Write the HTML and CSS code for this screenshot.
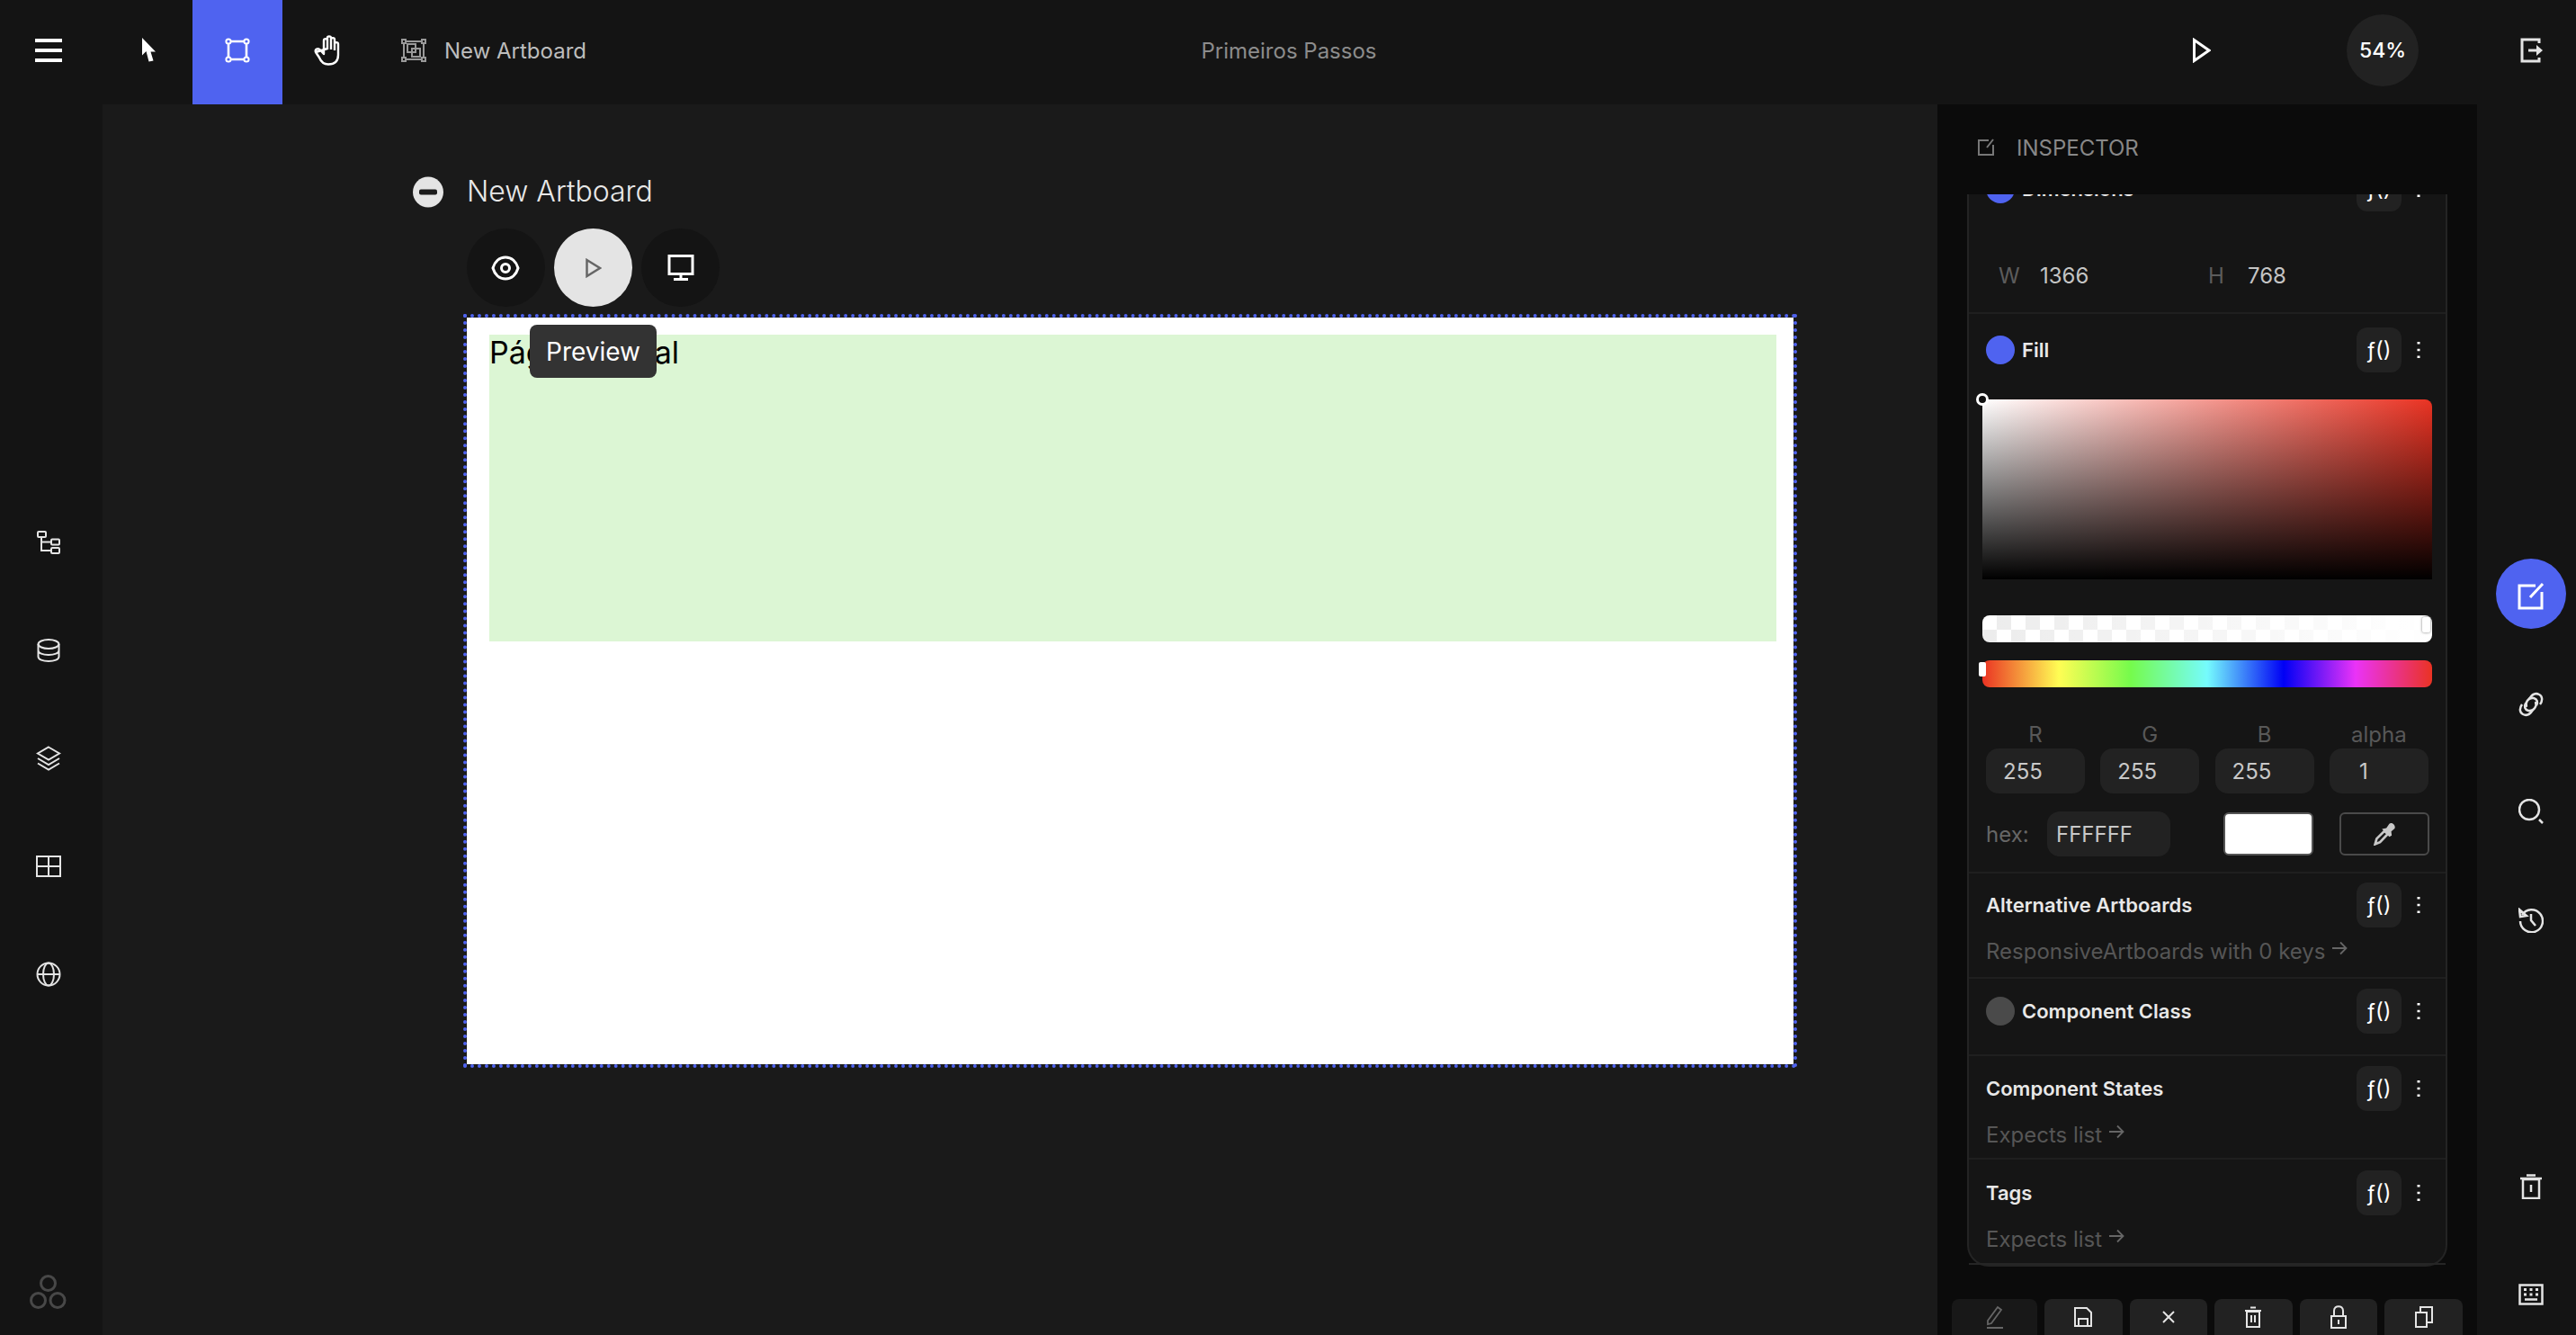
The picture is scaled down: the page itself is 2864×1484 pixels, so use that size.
FILE: index.html
```html
<!DOCTYPE html>
<html lang="pt">
<head>
<meta charset="utf-8">
<title>New Artboard</title>
<link rel="stylesheet" href="styles.css">
</head>
<body>
<header class="topbar">
  <div class="tool tool-menu"><svg width="30" height="26" viewBox="0 0 30 26"><path d="M0 2h30M0 13h30M0 24h30" class="s w" stroke-width="4"/></svg></div>
  <div class="tool tool-cursor"><svg width="18" height="28" viewBox="0 0 18 28"><path d="M1 0 16 15.500 10.500 15.500 13.500 25.500 8.500 26.500 5.500 15 1 19.500Z" fill="#fff"/></svg></div>
  <div class="tool tool-active"><svg width="28" height="28" viewBox="0 0 28 28"><path d="M4 7V21M7 4H21M24 7V21M7 24H21" class="s w" stroke-width="2.600"/><circle cx="4" cy="4" r="2.600" class="s w" stroke-width="2"/><circle cx="24" cy="4" r="2.600" class="s w" stroke-width="2"/><circle cx="4" cy="24" r="2.600" class="s w" stroke-width="2"/><circle cx="24" cy="24" r="2.600" class="s w" stroke-width="2"/></svg></div>
  <div class="tool tool-hand"><svg width="30" height="34" viewBox="0 0 30 34"><path d="M3 19 7 25C9 30 12 32.500 17 32.500 24 32.500 28 29 28 22V10C28 7.500 24 7.500 24 10V17M24 15V5C24 2.500 20 2.500 20 5V16M20 14V3C20 .8 16 .8 16 3V16M16 15V6C16 3.500 12 3.500 12 6V21L8 16.500C5.500 14 1.500 16 3 19Z" class="s w" stroke-width="2.400" stroke-linejoin="round"/></svg></div>
  <div class="doc">
    <svg width="28" height="26" viewBox="0 0 28 26"><path d="M3 3H25V23H3Z" class="s g" stroke-width="2"/><path d="M1 1h4v4H1zM23 1h4v4h-4zM1 21h4v4H1zM23 21h4v4h-4z" fill="#141414" class="g" stroke-width="2"/><path d="M7 6H16V15H7ZM12 11H21V20H12Z" class="s g" stroke-width="2"/></svg>
    <span>New Artboard</span>
  </div>
  <div class="project">Primeiros Passos</div>
  <div class="playtop"><svg width="20" height="28" viewBox="0 0 20 28"><path d="M1.500 2.500 18 14 1.500 25.500Z" class="s w" stroke-width="3"/></svg></div>
  <div class="zoom">54%</div>
  <div class="logout"><svg width="26" height="28" viewBox="0 0 26 28"><path d="M21 6V2H2V26H21V22" class="s l" stroke-width="3"/><path d="M9 14H19" class="s l" stroke-width="3"/><path d="M18 8 25 14 18 20Z" fill="#e4e4e4"/></svg></div>
</header>
<main class="main">
  <nav class="rail">
    <div class="rail-items">
      <svg width="26" height="26" viewBox="0 0 26 26"><rect x="1" y="1" width="9" height="6" rx="1" class="s l" stroke-width="2"/><rect x="16" y="9.500" width="9" height="6" rx="1" class="s l" stroke-width="2"/><rect x="16" y="19" width="9" height="6" rx="1" class="s l" stroke-width="2"/><path d="M5 7V22H16M5 12.500H16" class="s l" stroke-width="2"/></svg>
      <svg width="26" height="26" viewBox="0 0 26 26"><ellipse cx="13" cy="6" rx="11.500" ry="5" class="s l" stroke-width="2"/><path d="M1.500 6V20C1.500 23 6.500 25 13 25S24.500 23 24.500 20V6M1.500 13C1.500 16 6.500 18 13 18S24.500 16 24.500 13" class="s l" stroke-width="2"/></svg>
      <svg width="28" height="28" viewBox="0 0 28 28"><path d="M14 1.500 26 8.500 14 15.500 2 8.500ZM2 14 14 21 26 14M2 19.500 14 26.500 26 19.500" class="s l" stroke-width="2"/></svg>
      <svg width="28" height="24" viewBox="0 0 28 24"><path d="M1 1H27V23H1ZM14 1V23M1 12H27" class="s l" stroke-width="2"/></svg>
      <svg width="28" height="28" viewBox="0 0 28 28"><circle cx="14" cy="14" r="12.500" class="s l" stroke-width="2"/><ellipse cx="14" cy="14" rx="6" ry="12.500" class="s l" stroke-width="2"/><path d="M1.500 14H26.500" class="s l" stroke-width="2"/></svg>
    </div>
    <svg class="logo" width="42" height="38" viewBox="0 0 42 38"><circle cx="20.500" cy="9.500" r="8" class="s d" stroke-width="3"/><circle cx="9.500" cy="28.500" r="8" class="s d" stroke-width="3"/><circle cx="31" cy="28.500" r="8" class="s d" stroke-width="3"/></svg>
  </nav>
  <section class="canvas">
    <div class="board-title">
      <svg width="34" height="35" viewBox="0 0 34 35"><circle cx="17" cy="17.500" r="17" fill="#e4e4e4"/><rect x="7" y="14.500" width="20" height="6" rx="2" fill="#1a1a1a"/></svg>
      <span>New Artboard</span>
    </div>
    <div class="board-actions">
      <div class="round"><svg class="eye" width="32" height="28" viewBox="0 0 32 28"><path d="M16 2C23 2 28 7 30 14 28 21 23 26 16 26S4 21 2 14C4 7 9 2 16 2Z" class="s w" stroke-width="3"/><circle cx="16" cy="14" r="4.500" class="s w" stroke-width="3"/></svg></div>
      <div class="round round-on"><svg width="18" height="22" viewBox="0 0 18 22"><path d="M1.500 2 16 11 1.500 20Z" class="s p" stroke-width="2.500"/></svg></div>
      <div class="round"><svg width="30" height="30" viewBox="0 0 30 30"><path d="M2 1.500H28V21.500H2ZM15 21.500V27M7 27.500H23" class="s w" stroke-width="3"/></svg></div>
    </div>
    <div class="artboard">
      <div class="artboard-fill">Página Inicial</div>
      <div class="tooltip">Preview</div>
    </div>
  </section>
  <aside class="inspector">
    <div class="ins-head">
      <svg width="20" height="20" viewBox="0 0 20 20"><path d="M13 2H2V18H18V7M11 10 18 1" class="s g3" stroke-width="2"/></svg>
      <span>INSPECTOR</span>
    </div>
    <div class="ins-scroll">
      <div class="card">
        <div class="sec sec-dim">
          <div class="sec-row"><i class="dot dot-blue"></i><b>Dimensions</b><em class="fn">ƒ()</em><svg class="kebab" width="4" height="20" viewBox="0 0 4 20"><path d="M2 1v2.500M2 8.800v2.500M2 16.500v2.500" class="s w" stroke-width="3"/></svg></div>
          <div class="dims"><span class="mut">W</span><span class="val">1366</span><span class="mut mut-h">H</span><span class="val">768</span></div>
        </div>
        <div class="sec sec-fill">
          <div class="sec-row"><i class="dot dot-blue"></i><b>Fill</b><em class="fn">ƒ()</em><svg class="kebab" width="4" height="20" viewBox="0 0 4 20"><path d="M2 1v2.500M2 8.800v2.500M2 16.500v2.500" class="s w" stroke-width="3"/></svg></div>
          <div class="sat"><i class="sat-handle"></i></div>
          <div class="alpha"><i class="alpha-handle"></i></div>
          <div class="hue"><i class="hue-handle"></i></div>
          <div class="rgba">
            <label>R</label><label>G</label><label>B</label><label>alpha</label>
            <span class="field">255</span><span class="field">255</span><span class="field">255</span><span class="field field-one">1</span>
          </div>
          <div class="hexrow">
            <span class="hex-label">hex:</span><span class="field hex-field">FFFFFF</span>
            <span class="swatch"></span>
            <span class="dropper"><svg width="26" height="26" viewBox="0 0 24 24"><path d="M2.500 22.500 4 17 12 9 15.500 12 7.500 20.500Z" class="s m" stroke-width="2.500"/><path d="M9.500 7 14 6 17 1.500C19.500 -.5 24 3 22.500 6.500L19 9.500 19.500 13.500 17 15Z" fill="#c8c8c8"/></svg></span>
          </div>
        </div>
        <div class="sec sec-alt">
          <div class="sec-row"><b>Alternative Artboards</b><em class="fn">ƒ()</em><svg class="kebab" width="4" height="20" viewBox="0 0 4 20"><path d="M2 1v2.500M2 8.800v2.500M2 16.500v2.500" class="s w" stroke-width="3"/></svg></div>
          <div class="hint">ResponsiveArtboards with 0 keys <svg width="18" height="16" viewBox="0 0 18 16"><path d="M1 8H16M10 1.500 16.500 8 10 14.500" class="s h" stroke-width="1.800"/></svg></div>
        </div>
        <div class="sec sec-class">
          <div class="sec-row"><i class="dot dot-gray"></i><b>Component Class</b><em class="fn">ƒ()</em><svg class="kebab" width="4" height="20" viewBox="0 0 4 20"><path d="M2 1v2.500M2 8.800v2.500M2 16.500v2.500" class="s w" stroke-width="3"/></svg></div>
        </div>
        <div class="sec sec-states">
          <div class="sec-row"><b>Component States</b><em class="fn">ƒ()</em><svg class="kebab" width="4" height="20" viewBox="0 0 4 20"><path d="M2 1v2.500M2 8.800v2.500M2 16.500v2.500" class="s w" stroke-width="3"/></svg></div>
          <div class="hint">Expects list <svg width="18" height="16" viewBox="0 0 18 16"><path d="M1 8H16M10 1.500 16.500 8 10 14.500" class="s h" stroke-width="1.800"/></svg></div>
        </div>
        <div class="sec sec-tags">
          <div class="sec-row"><b>Tags</b><em class="fn">ƒ()</em><svg class="kebab" width="4" height="20" viewBox="0 0 4 20"><path d="M2 1v2.500M2 8.800v2.500M2 16.500v2.500" class="s w" stroke-width="3"/></svg></div>
          <div class="hint">Expects list <svg width="18" height="16" viewBox="0 0 18 16"><path d="M1 8H16M10 1.500 16.500 8 10 14.500" class="s h" stroke-width="1.800"/></svg></div>
        </div>
      </div>
    </div>
    <div class="ins-actions">
      <span class="act act-off"><svg width="20" height="26" viewBox="0 0 20 26"><path d="M2 17 13 2 17 5 6 20 2 21ZM1 25H19" class="s d2" stroke-width="1.800"/></svg></span>
      <span class="act"><svg width="20" height="22" viewBox="0 0 20 22"><path d="M1 1H14L19 6V21H1ZM5 21V13H15V21" class="s l" stroke-width="2"/></svg></span>
      <span class="act"><svg width="16" height="16" viewBox="0 0 16 16"><path d="M2 2 14 14M14 2 2 14" class="s l" stroke-width="2"/></svg></span>
      <span class="act"><svg width="20" height="24" viewBox="0 0 20 24"><path d="M3 6H17V23H3ZM1 5H19M7 1.500H13M8 10V18M12 10V18" class="s l" stroke-width="2"/></svg></span>
      <span class="act"><svg width="20" height="26" viewBox="0 0 20 26"><path d="M2 12H18V25H2ZM5 12V6C5 -.5 15 -.5 15 6V12M10 16V21" class="s l" stroke-width="2"/></svg></span>
      <span class="act"><svg width="20" height="24" viewBox="0 0 20 24"><path d="M1 7H13V23H1ZM6 7V1H19V18H13" class="s l" stroke-width="2"/></svg></span>
    </div>
  </aside>
  <nav class="right-rail">
    <div class="r-active"><svg width="30" height="30" viewBox="0 0 30 30"><path d="M20 3H2V28H27V10M14 16 28 1" class="s w" stroke-width="3"/></svg></div>
    <div class="r-item r-link"><svg width="28" height="28" viewBox="0 0 28 28"><path d="M12 8C15 3 19 1 23 3 27 5 27 10 24 14M16 20C13 25 9 27 5 25 1 23 1 18 4 14" class="s l" stroke-width="2.500"/><path d="M9 17C7 12 11 6 17 7 21 8 22 12 20 15M19 11C21 16 17 22 11 21 7 20 6 16 8 13" class="s l" stroke-width="2.500"/></svg></div>
    <div class="r-item r-search"><svg width="28" height="28" viewBox="0 0 28 28"><circle cx="12" cy="12" r="11" class="s l" stroke-width="2.500"/><path d="M23 23 27 27" class="s l" stroke-width="2.500"/></svg></div>
    <div class="r-item r-hist"><svg width="28" height="28" viewBox="0 0 28 28"><path d="M4 8A12.500 12.500 0 1 1 2 15" class="s l" stroke-width="2.500"/><path d="M1 2 2 10 9 9ZM14 7V14L19 20" class="s l" stroke-width="2.500"/></svg></div>
    <div class="r-item r-trash"><svg width="26" height="28" viewBox="0 0 26 28"><path d="M4 6H22V27H4ZM1 5H25M8 1.500H18M13 12V20" class="s l" stroke-width="2.500"/></svg></div>
    <div class="r-item r-keys"><svg width="28" height="24" viewBox="0 0 28 24"><path d="M1.500 1.500H26.500V22.500H1.500ZM7 17.500H21" class="s l" stroke-width="2.500"/><path d="M6 5h3v3H6zM12.500 5h3v3h-3zM19 5h3v3h-3zM6 10.500h3v3H6zM12.500 10.500h3v3h-3zM19 10.500h3v3h-3z" fill="#e4e4e4"/></svg></div>
  </nav>
</main>
</body>
</html>
```
FILE: styles.css
```css
* { box-sizing: border-box; }
html, body { margin: 0; height: 100%; }
body {
  width: 2864px; height: 1484px; overflow: hidden;
  display: flex; flex-direction: column;
  background: #1a1a1a; color: #fff;
  font-family: Inter, "Noto Sans", sans-serif;
}
svg { display: block; flex: none; }
.s { fill: none; }
.w { stroke: #fff; }
.l { stroke: #e4e4e4; }
.g { stroke: #999; }
.g3 { stroke: #777; }
.d { stroke: #484848; }
.d2 { stroke: #666; }
.p { stroke: #666; }
.m { stroke: #c8c8c8; }
.h { stroke: #666; }

.topbar { height: 116px; flex: none; display: flex; align-items: stretch; background: #141414; position: relative; }
.topbar > div { display: flex; align-items: center; padding-bottom: 4px; }
.tool { width: 100px; justify-content: center; }
.tool-menu { width: 108px; }
.tool-cursor { width: 106px; padding-left: 10px; }
.tool-hand { padding-right: 2px; }
.tool-active { background: #4f63f0; }
.doc { gap: 20px; margin-left: 32px; font-size: 24px; color: #bdbdbd; }
.topbar > .project { position: absolute; left: 1336px; top: 0; height: 116px; width: 194px; justify-content: center; font-size: 24px; color: #8c8c8c; white-space: nowrap; }
.playtop { margin-left: auto; }
.topbar > .zoom { width: 80px; height: 80px; align-self: flex-start; margin: 16px 0 0 151px; padding: 0; border-radius: 50%; background: #222; justify-content: center; font-size: 23px; font-weight: 500; }
.logout { margin-left: 113px; margin-right: 36px; }

.main { flex: 1; display: flex; min-height: 0; }
.rail { width: 114px; flex: none; background: #141414; position: relative; }
.rail-items { display: grid; grid-auto-rows: 120px; justify-items: center; align-items: center; width: 108px; margin-top: 427px; }
.logo { position: absolute; left: 33px; bottom: 29px; }

.canvas { width: 2040px; flex: none; padding: 80px 0 0 345px; }
.board-title { display: flex; align-items: center; gap: 26px; height: 35px; font-size: 32px; font-weight: 300; color: #e8e8e8; }
.board-title span { padding-bottom: 3px; }
.board-actions { display: flex; gap: 10px; margin: 23px 0 0 60px; }
.round { width: 87px; height: 87px; border-radius: 50%; background: #141414; display: flex; align-items: center; justify-content: center; }
.round-on { background: #e4e4e4; }
.eye { margin-right: 2px; }
.artboard { position: relative; width: 1483px; height: 838px; margin: 8px 0 0 56px; padding: 19px 19px 0 25px; background: #fff; background-clip: padding-box; border: 4px dotted #4f63f0; }
.artboard-fill { height: 341px; background: #dcf6d4; color: #000; font-size: 34px; line-height: 40px; }
.tooltip { position: absolute; left: 70px; top: 8px; width: 141px; height: 59px; border-radius: 8px; background: #333; color: #fff; font-size: 28px; display: flex; align-items: center; justify-content: center; }

.inspector { width: 600px; flex: none; background: #0b0b0b; display: flex; flex-direction: column; }
.ins-head { height: 100px; flex: none; display: flex; align-items: center; gap: 24px; padding: 0 0 4px 44px; font-size: 24px; color: #888; background: #0b0b0b; position: relative; z-index: 1; }
.ins-scroll { flex: 1; min-height: 0; overflow: hidden; padding: 0 33px; }
.card { margin-top: -48px; width: 534px; height: 1240px; background: #151515; border: 2px solid #242424; border-radius: 24px; }
.sec { border-bottom: 2px solid #1f1f1f; padding: 0 0 0 19px; }
.sec:last-child { border-bottom-color: #262626; }
.sec-row { display: flex; align-items: center; height: 50px; padding-right: 28px; }
.sec-row b { font-size: 22px; font-weight: 600; color: #e8e8e8; white-space: nowrap; }
.dot { width: 32px; height: 32px; border-radius: 50%; margin-right: 8px; flex: none; }
.dot-blue { background: #4f63f0; }
.dot-gray { background: #4a4a4a; }
.fn { margin-left: auto; width: 50px; height: 50px; border-radius: 12px; background: #222; display: flex; align-items: center; justify-content: center; font-style: normal; font-size: 24px; }
.kebab { margin-left: 17px; }

.sec-dim { padding-top: 15px; height: 179px; }
.dims { display: flex; align-items: center; height: 34px; margin-top: 54px; font-size: 24px; }
.mut { color: #5c5c5c; padding-left: 14px; width: 60px; }
.mut-h { padding-left: 0; width: 44px; margin-left: 59px; }
.val { color: #c4c4c4; width: 128px; }

.sec-fill { padding-top: 15px; height: 622px; }
.sat { position: relative; width: 500px; height: 200px; margin: 30px 0 0 -4px; border-radius: 0 8px 0 0; background: linear-gradient(to top, #000, transparent), linear-gradient(to right, #fff, #ea3323); }
.sat-handle { position: absolute; left: -7px; top: -7px; width: 14px; height: 14px; border-radius: 50%; border: 3px solid #fff; background: #111; }
.alpha { position: relative; width: 500px; height: 30px; margin: 40px 0 0 -4px; border-radius: 8px; background: linear-gradient(to right, rgba(255,255,255,0), #fff), repeating-conic-gradient(#ececec 0 25%, #fff 0 50%) 0 0 / 32px 32px; }
.alpha-handle { position: absolute; right: 2px; top: 2px; width: 9px; height: 17px; border-radius: 2px; background: #fff; box-shadow: 0 0 3px #777; }
.hue { position: relative; width: 500px; height: 30px; margin: 20px 0 0 -4px; border-radius: 8px; background: linear-gradient(to right, #ea3323, #fffd54 17%, #75fb4c 33%, #75fbfd 50%, #0000f5 67%, #ea33f7 83%, #ea3323); }
.hue-handle { position: absolute; left: -4px; top: 2px; width: 8px; height: 16px; border-radius: 2px; background: #fff; }
.rgba { display: grid; grid-template-columns: repeat(4, 110px); column-gap: 17.300px; row-gap: 2px; margin-top: 40px; }
.rgba label { text-align: center; font-size: 24px; line-height: 26px; color: #585858; }
.field { height: 50px; border-radius: 14px; background: #222; color: #c8c8c8; font-size: 24px; display: flex; align-items: center; padding-left: 19px; }
.field-one { padding-left: 33px; }
.hexrow { display: flex; align-items: center; height: 50px; margin-top: 20px; }
.hex-label { font-size: 24px; color: #666; width: 68px; }
.hex-field { width: 137px; padding-left: 10px; }
.swatch { width: 100px; height: 48px; margin-left: 59px; border-radius: 6px; border: 2px solid #555; background: #fff; }
.dropper { width: 100px; height: 48px; margin-left: 29px; border-radius: 6px; border: 2px solid #4a4a4a; display: flex; align-items: center; justify-content: center; }

.hint { display: flex; align-items: flex-start; margin-top: 12px; font-size: 24px; line-height: 30px; color: #565656; white-space: pre; }
.hint svg { margin-top: 3px; }
.sec-alt { padding-top: 10px; height: 117px; }
.sec-class { padding-top: 11px; height: 86px; }
.sec-states { padding-top: 11px; height: 115px; }
.sec-tags { padding-top: 12px; height: 117px; }

.ins-actions { height: 40px; flex: none; margin: 0 0 0 16px; display: flex; gap: 8px; }
.act { width: 86.600px; height: 40px; border-radius: 8px 8px 0 0; background: #222; display: flex; align-items: center; justify-content: center; }
.act-off { width: 95px; background: #181818; }

.right-rail { width: 110px; flex: none; background: #141414; display: flex; flex-direction: column; align-items: center; padding: 505px 0 0 10px; }
.r-active { width: 78px; height: 78px; padding-top: 6px; border-radius: 50%; background: #4f63f0; display: flex; align-items: center; justify-content: center; flex: none; }
.r-item { height: 28px; flex: none; display: flex; align-items: center; }
.r-link { margin-top: 70px; }
.r-search { margin-top: 91px; }
.r-hist { margin-top: 93px; }
.r-trash { margin-top: 268px; }
.r-keys { margin-top: 92px; }
```
